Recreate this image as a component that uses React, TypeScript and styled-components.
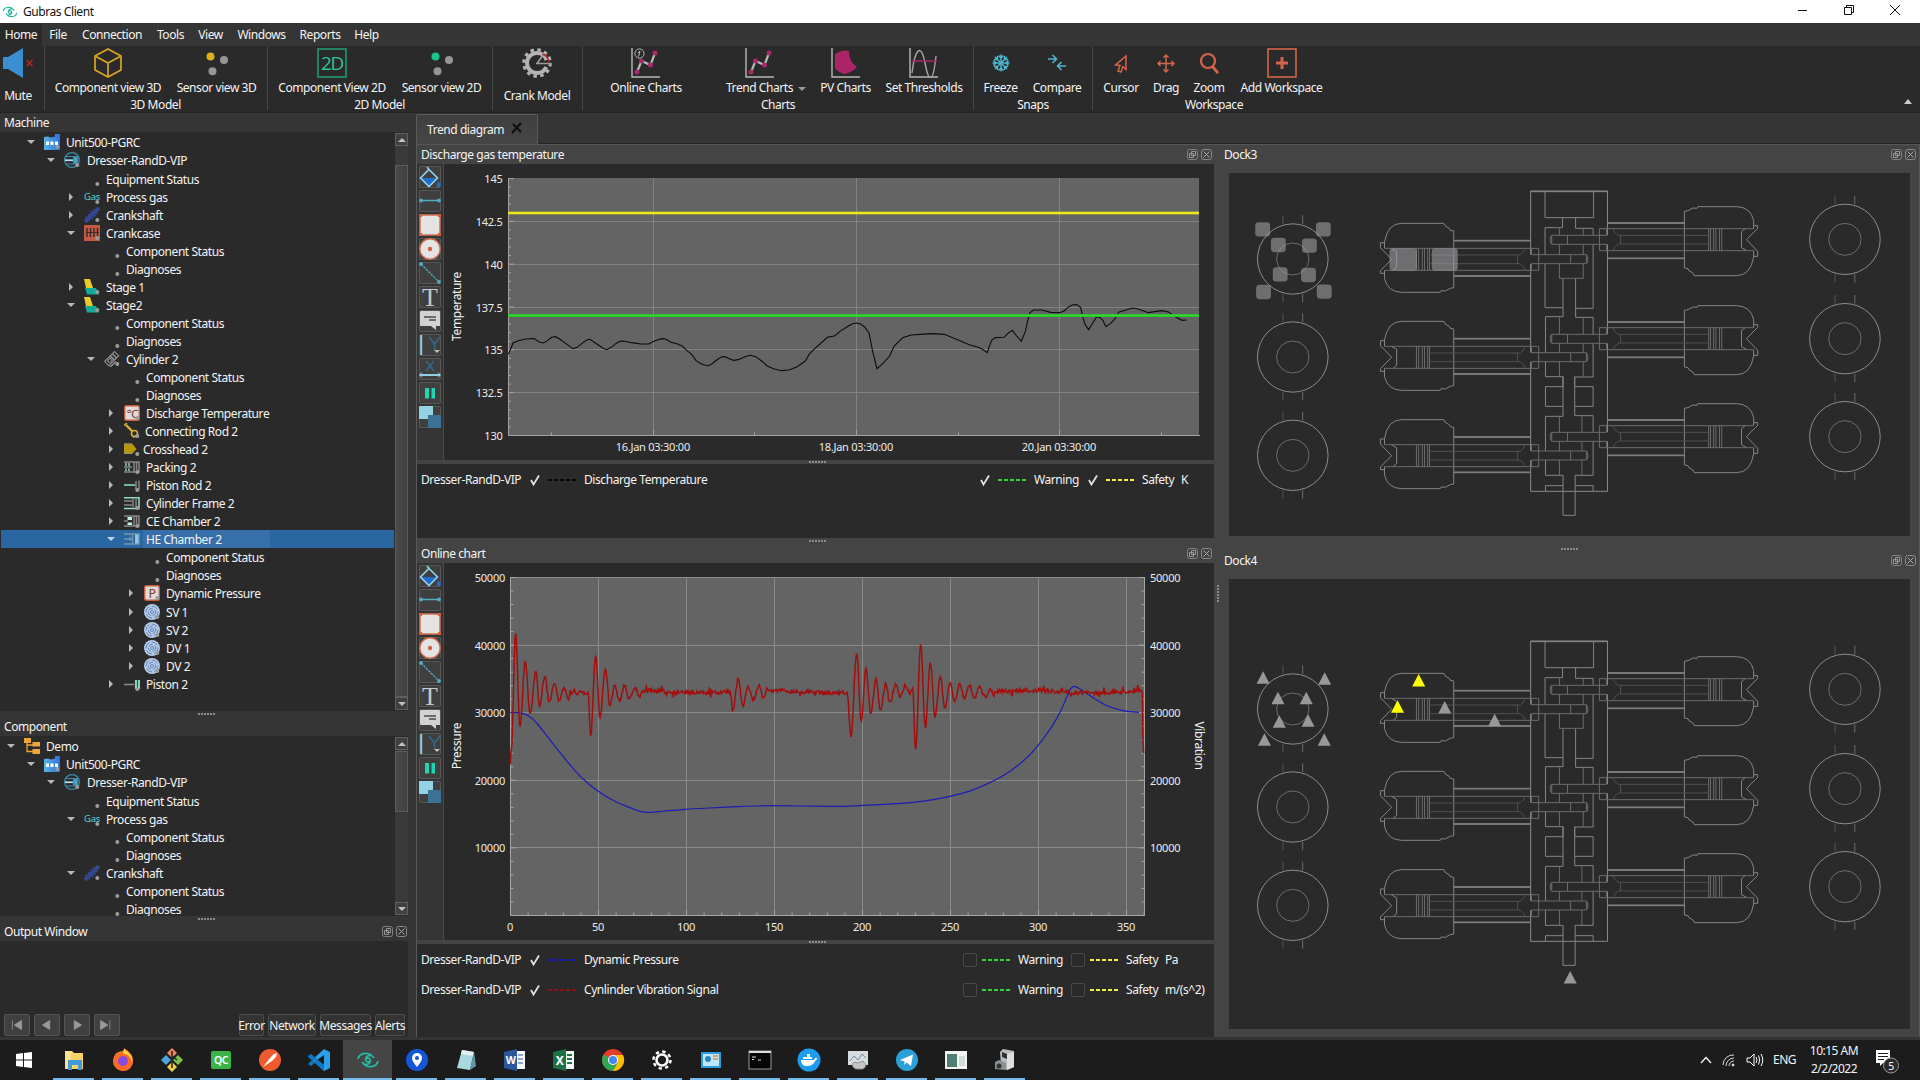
import React from 'react';
import styled, { createGlobalStyle } from 'styled-components';

const Global = createGlobalStyle`
  *, *::before, *::after { box-sizing: border-box; }
  html, body { margin: 0; background: #353535; }
  body { font: 12px/18px "Noto Sans", "Open Sans", sans-serif; letter-spacing: -0.43px; color: #f4f4f4; overflow: hidden; }
  svg { display: block; }
`;

const Window = styled.div`
  width: 1920px; height: 1080px; display: flex; flex-direction: column; background: #353535;
  white-space: nowrap; overflow: hidden;
`;

/* ---------- title + menu ---------- */
const TitleBar = styled.header`
  height: 23px; background: #fff; color: #111; display: flex; align-items: center; padding: 0 19px 0 3px; flex: none;
`;
const TitleText = styled.span`margin-left: 6px; flex: 1;`;
const WinControls = styled.div`display: flex; gap: 34px; align-items: center; padding-bottom: 3px;`;
const MenuBar = styled.nav`height: 23px; display: flex; flex: none; background: #353535;`;
const MenuItem = styled.div<{ $w: number; $active?: boolean }>`
  width: ${p => p.$w}px; text-align: center; line-height: 24px; background: ${p => (p.$active ? '#2a2a2a' : 'transparent')};
`;

/* ---------- ribbon ---------- */
const RibbonBar = styled.div`height: 67px; display: flex; flex: none; background: #2a2a2a; border-bottom: 1px solid #222; position: relative;`;
const Group = styled.div<{ $w: number; $pad: number; $sep?: boolean }>`
  width: ${p => p.$w}px; padding-left: ${p => p.$pad}px; height: 64px; display: flex; flex-direction: column; flex: none;
  border-right: 1px solid ${p => (p.$sep ? '#474747' : 'transparent')};
`;
const GroupRow = styled.div`display: flex;`;
const GroupLabel = styled.div<{ $w: number }>`width: ${p => p.$w}px; text-align: center; line-height: 18px; margin-top: -1px;`;
const Item = styled.div<{ $w: number; $tall?: boolean; $ml?: number }>`
  width: ${p => p.$w}px; margin-left: ${p => p.$ml ?? 0}px; display: flex; flex-direction: column; align-items: center; padding-top: 2px;
  line-height: 18px; height: ${p => (p.$tall ? 59 : 51)}px; justify-content: space-between; flex: none;
`;
const CollapseMark = styled.div`position: absolute; right: 8px; bottom: 8px;`;
const DropMark = styled.span`
  display: inline-block; border: 4px solid transparent; border-top: 4px solid #9a9a9a; border-bottom: 0; margin-left: 5px; vertical-align: 1px;
`;

const Axes = () => <path d="M1 0V29H29" stroke="#b8b8b8" fill="none" strokeWidth="1.4" />;
const Trend = () => (
  <g>
    <path d="M6 24L10.5 13L19.5 17L24 5" stroke="#b8b8b8" strokeWidth="2.2" fill="none" />
    {[[6, 24], [10.5, 13], [19.5, 17], [24, 5]].map(([x, y]) => <circle key={x} cx={x} cy={y} r="2.5" fill="#a92a6a" />)}
  </g>
);
const Ico = ({ w = 30, h = 30, children }: { w?: number; h?: number; children: React.ReactNode }) => (
  <svg width={w} height={h} viewBox={`0 0 ${w} ${h}`}>{children}</svg>
);
const SensorDots = ({ c }: { c: string }) => (
  <Ico w={22}><circle cx="4.500" cy="8.500" r="4" fill={c} /><circle cx="18" cy="12" r="4" fill="#969696" /><circle cx="6.500" cy="23.300" r="4" fill="#969696" /></Ico>
);
const Gear = () => (
  <Ico>
    <circle cx="15" cy="15" r="10" fill="none" stroke="#b4b4b4" strokeWidth="4" strokeDasharray="55.500 7.300" strokeDashoffset="-4" />
    <circle cx="15" cy="15" r="13.300" fill="none" stroke="#b4b4b4" strokeWidth="3" strokeDasharray="3.480 3.480" />
    <path d="M15 15.500L21 7M14 15.500H29" stroke="#9c9c9c" strokeWidth="1.600" />
    <path d="M20.500 6Q26 8 27 14" fill="none" stroke="#b32424" strokeWidth="1.400" />
  </Ico>
);
const Snow = () => (
  <Ico w={18}>
    <g stroke="#4fb6cf" strokeWidth="1.500" fill="none" transform="translate(9 15)">
      {[0, 45, 90, 135, 180, 225, 270, 315].map(a => <path key={a} transform={`rotate(${a})`} d="M0 0V-8.500M-2.500 -7.500L0 -5L2.500 -7.500" />)}
    </g>
  </Ico>
);

const Ribbon = () => (
  <RibbonBar>
    <Group $w={45} $pad={0} $sep>
      <GroupRow>
        <Item $w={36} $tall>
          <Ico w={30}><path d="M0 9H5L20 0V30L5 21H0Z" fill="#3b8fd0" /><path d="M23.500 12L29.500 18M29.500 12L23.500 18" stroke="#b02a2a" strokeWidth="1.500" /></Ico>
          <span>Mute</span>
        </Item>
      </GroupRow>
    </Group>
    <Group $w={223} $pad={2} $sep>
      <GroupRow>
        <Item $w={122}>
          <Ico><g fill="none" stroke="#d8a620" strokeWidth="1.700"><path d="M15 1L28 8V22L15 29L2 22V8Z" /><path d="M2 8L15 15L28 8M15 15V29" /></g></Ico>
          <span>Component view 3D</span>
        </Item>
        <Item $w={95}><SensorDots c="#dfae1c" /><span>Sensor view 3D</span></Item>
      </GroupRow>
      <GroupLabel $w={217}>3D Model</GroupLabel>
    </Group>
    <Group $w={225} $pad={3} $sep>
      <GroupRow>
        <Item $w={122}>
          <Ico><rect x="1" y="1" width="28" height="28" fill="none" stroke="#249a72" strokeWidth="1.600" /><text x="15" y="22" fontSize="19" fontFamily="Open Sans" fontWeight="400" textAnchor="middle" letterSpacing="-1.2" fill="#2fc493">2D</text></Ico>
          <span>Component View 2D</span>
        </Item>
        <Item $w={97}><SensorDots c="#1dc48a" /><span>Sensor view 2D</span></Item>
      </GroupRow>
      <GroupLabel $w={217}>2D Model</GroupLabel>
    </Group>
    <Group $w={90} $pad={0} $sep>
      <GroupRow><Item $w={88} $tall><Gear /><span>Crank Model</span></Item></GroupRow>
    </Group>
    <Group $w={391} $pad={18} $sep>
      <GroupRow>
        <Item $w={90}>
          <Ico><Axes /><Trend /><circle cx="8.500" cy="5.500" r="4.600" fill="none" stroke="#b8b8b8" /><path d="M7.500 8.500L9 3L7 5" stroke="#b8b8b8" fill="none" /></Ico>
          <span>Online Charts</span>
        </Item>
        <Item $w={112} $ml={19}><Ico w={42}><Axes /><Trend /></Ico><span>Trend Charts<DropMark /></span></Item>
        <Item $w={47}><Ico><Axes /><path d="M4 6Q12 1 18 3Q18 14 26 19Q20 25 13 26Q5 23 4 20Z" fill="#ab2468" /></Ico><span>PV Charts</span></Item>
        <Item $w={98} $ml={6}><Ico><Axes /><path d="M3 25C6 1 12 -6 16 15S24 36 27 8" fill="none" stroke="#a4a4a4" strokeWidth="1.400" /><path d="M3 13H28" stroke="#a92a6a" strokeWidth="1.500" /></Ico><span>Set Thresholds</span></Item>
      </GroupRow>
      <GroupLabel $w={354}>Charts</GroupLabel>
    </Group>
    <Group $w={119} $pad={1} $sep>
      <GroupRow>
        <Item $w={51}><Snow /><span>Freeze</span></Item>
        <Item $w={62}><Ico w={18}><g fill="none" stroke="#4fb6cf" strokeWidth="1.600"><path d="M0 11H8M4.500 7L8.500 11L4.500 15M18 18H10M13.500 14L9.500 18L13.500 22" /></g></Ico><span>Compare</span></Item>
      </GroupRow>
      <GroupLabel $w={116}>Snaps</GroupLabel>
    </Group>
    <Group $w={260} $pad={4}>
      <GroupRow>
        <Item $w={48}><Ico w={14}><path d="M12 8L1.500 17L6 17.500L4 23L7 24L9 18.500L12 21.500Z" fill="none" stroke="#d4654a" strokeWidth="1.500" /></Ico><span>Cursor</span></Item>
        <Item $w={42}><Ico w={18}><g fill="none" stroke="#d4654a" strokeWidth="1.500"><path d="M9 7V24M1 15.500H17M6.500 9.500L9 7L11.500 9.500M6.500 21.500L9 24L11.500 21.500M3.500 13L1 15.500L3.500 18M14.500 13L17 15.500L14.500 18" /></g></Ico><span>Drag</span></Item>
        <Item $w={44}><Ico w={20}><circle cx="9" cy="13" r="7" fill="none" stroke="#d4654a" strokeWidth="2.200" /><path d="M13.500 18.500L19 25" stroke="#d4654a" strokeWidth="2.800" /></Ico><span>Zoom</span></Item>
        <Item $w={101}><Ico><rect x="1" y="1" width="28" height="28" fill="none" stroke="#d4654a" strokeWidth="1.600" /><path d="M15 9V21M9 15H21" stroke="#d4654a" strokeWidth="3" /></Ico><span>Add Workspace</span></Item>
      </GroupRow>
      <GroupLabel $w={234}>Workspace</GroupLabel>
    </Group>
    <CollapseMark><svg width="8" height="5"><path d="M0 5L4 0L8 5Z" fill="#ccc" /></svg></CollapseMark>
  </RibbonBar>
);

/* ---------- tree ---------- */
const Dot = () => <circle cx="13.300" cy="13" r="2" fill="#9d9d9d" />;
const icons: Record<string, React.ReactNode> = {
  none: null,
  demo: <g fill="#f0a636"><rect width="7" height="5" /><rect x="8.500" y="4" width="7.500" height="4.500" /><rect x="8.500" y="11" width="7.500" height="5" /><path d="M3 5V13.500H9M3 7H9" stroke="#f0a636" strokeWidth="1.300" fill="none" /></g>,
  unit: <g><path d="M0 3L4 2.500L7 3.500L11 2.500V0H16V16H0Z" fill="url(#unitBlue)" /><path d="M2 7.500H5V11H2ZM6.500 7.500H9.500V11H6.500ZM11 7.500H14V11H11Z" fill="#fff" /></g>,
  vip: <g fill="none" stroke="#3b8ea8" strokeWidth="1.200"><circle cx="8" cy="8" r="7.400" /><path d="M2 4.500H14M2 12H14M1 8H10" /><path d="M1 8.300H9" stroke="#b8e2ee" strokeWidth="1.600" /><rect x="9.500" y="5" width="4" height="6" fill="#4ca6c4" /></g>,
  gas: <text x="0" y="10.500" fontSize="9.500" letterSpacing="-.2" fill="#52d6dc">Gas</text>,
  shaft: <g stroke="#34478e"><path d="M1 15L15 1" strokeWidth="4" /><path d="M1.500 9.500L6 14M4 7L9 12M6.500 4.500L11.500 9.500M9 2.500L13.500 7" strokeWidth="1.800" /></g>,
  crankcase: <g><rect width="16" height="16" fill="#c35a45" /><path d="M3 3V12M6.500 3V12M10 3V12M13.500 3V12" stroke="#3a2a27" strokeWidth="1.400" /><path d="M2 7.500H15" stroke="#3a2a27" /></g>,
  stage: <g><path d="M0 0H6L9 9H2Z" fill="#e8cc2a" /><path d="M1 9H12L15 15.500H3Z" fill="#16ab99" /></g>,
  cyl: <g transform="rotate(-45 8 8)" fill="none" stroke="#999"><rect x="1" y="4.500" width="14" height="6" /><rect x="3.500" y="6" width="4" height="3" /><path d="M9 4.500V10.500M12 4.500V10.500M0 12.500H9" strokeWidth="1.300" /></g>,
  temp: <g><rect x=".7" y=".7" width="14.600" height="14.600" rx="1.500" fill="#dcdcdc" stroke="#c85b3a" strokeWidth="1.400" /><text x="8" y="12.500" fontSize="11.500" textAnchor="middle" fill="#7d3a26">℃</text></g>,
  press: <g><rect x=".7" y=".7" width="14.600" height="14.600" rx="1.500" fill="#dcdcdc" stroke="#c85b3a" strokeWidth="1.400" /><text x="8" y="12.500" fontSize="12.500" textAnchor="middle" fill="#7d3a26">P</text></g>,
  conrod: <g fill="none" stroke="#d2b141"><circle cx="10.500" cy="10.500" r="3" strokeWidth="1.600" /><path d="M2 2L8.500 8.500" strokeWidth="2.400" /><path d="M0 2.500L3 0M9 14L13 13" strokeWidth="1.600" /></g>,
  crosshead: <g><path d="M0 2.500H8L12.500 8L8 13H0Z" fill="#b6980d" /><path d="M0 3H8M0 12.500H8" stroke="#8d8d8d" /></g>,
  packing: <g fill="none" stroke="#868686" strokeWidth="1.500"><path d="M0 3H15V13H0M0 8H8M10 3V13M12.500 3V11" /><path d="M2 4V7M5 4V7M2 9.500V12M5 9.500V12" stroke="#8fcfc0" /></g>,
  pistonrod: <g fill="none"><path d="M0 8H11" stroke="#86d6c3" strokeWidth="1.600" /><path d="M12 4V12M15 3.500V13" stroke="#868686" strokeWidth="1.500" /></g>,
  frame: <g fill="none" strokeWidth="1.500"><path d="M0 2.800H15V13.500H0" stroke="#8fdcca" /><path d="M0 6H8M0 10H8M9 4V12M12 4V12" stroke="#868686" /></g>,
  ce: <g fill="none" stroke="#868686" strokeWidth="1.500"><path d="M0 3H15V13H0M0 8H4M10 3V13M12.500 3V11" /><path d="M3.500 4H8V7H3.500ZM3.500 9.500H8V12H3.500Z" fill="#bff0e4" stroke="none" /></g>,
  he: <g fill="none" stroke="#7697ad" strokeWidth="1.300"><path d="M0 3H15V13H0M0 8H8M8.500 3V13M6 6V10" /><rect x="11" y="3.500" width="3.500" height="9" fill="#8fc8e6" stroke="none" /></g>,
  valve: <g fill="none"><circle cx="8" cy="8" r="8" fill="#b7cbe6" /><g stroke="#5f87bf"><circle cx="8" cy="8" r="6" strokeDasharray="7 2" /><circle cx="8" cy="8" r="3.700" strokeDasharray="5 1.500" /><circle cx="8" cy="8" r="1.500" /></g></g>,
  piston: <g fill="none"><path d="M0 8.500H10" stroke="#8d8d8d" strokeWidth="1.500" /><path d="M12 4V13M15 4V13" stroke="#86d6c3" strokeWidth="2.200" /></g>,
};

type Node = { d: number; t: string; i?: string; a?: 'open' | 'shut'; sel?: boolean; h?: number; dx?: number };
const Row = styled.div<{ $d: number; $h: number; $sel?: boolean }>`
  display: flex; height: ${p => p.$h}px; padding-left: ${p => 24 + p.$d * 20}px; background: ${p => (p.$sel ? '#2a66a2' : 'transparent')};
  margin-left: 1px; margin-right: 1px; line-height: 20px; flex: none;
`;
const ArrowBox = styled.div`width: 11px; height: 18px; display: flex; align-items: center; justify-content: center;`;
const IconBox = styled.div`width: 16px; margin: 1px 3px 0 8px; height: 16px;`;
const RowText = styled.span<{ $sel?: boolean; $dx: number }>`
  padding: 0 ${p => (p.$sel ? 48 : 2)}px 0 ${p => 3 + p.$dx}px; background: ${p => (p.$sel ? '#376fab' : 'transparent')}; height: 18px;
`;
const TreeRow = ({ n }: { n: Node }) => (
  <Row $d={n.d} $h={n.h ?? 18} $sel={n.sel}>
    <ArrowBox>
      {n.a === 'open' && <svg width="8" height="4"><path d="M0 0H8L4 4Z" fill={n.sel ? '#bcd6f0' : '#b8b8b8'} /></svg>}
      {n.a === 'shut' && <svg width="4" height="8"><path d="M0 0V8L4 4Z" fill="#b8b8b8" /></svg>}
    </ArrowBox>
    <IconBox><svg width="16" height="16" viewBox="0 0 16 16">{icons[n.i ?? 'none']}{n.i !== 'demo' && !n.sel && <Dot />}</svg></IconBox>
    <RowText $sel={n.sel} $dx={n.dx ?? 0}>{n.t}</RowText>
  </Row>
);
const status = (d: number): Node[] => [{ d, t: 'Component Status' }, { d, t: 'Diagnoses' }];
const machine: Node[] = [
  { d: 0, t: 'Unit500-PGRC', i: 'unit', a: 'open' },
  { d: 1, t: 'Dresser-RandD-VIP', i: 'vip', a: 'open', h: 19, dx: 1 },
  { d: 2, t: 'Equipment Status' },
  { d: 2, t: 'Process gas', i: 'gas', a: 'shut' },
  { d: 2, t: 'Crankshaft', i: 'shaft', a: 'shut' },
  { d: 2, t: 'Crankcase', i: 'crankcase', a: 'open' },
  ...status(3),
  { d: 2, t: 'Stage 1', i: 'stage', a: 'shut' },
  { d: 2, t: 'Stage2', i: 'stage', a: 'open' },
  ...status(3),
  { d: 3, t: 'Cylinder 2', i: 'cyl', a: 'open' },
  ...status(4),
  { d: 4, t: 'Discharge Temperature', i: 'temp', a: 'shut' },
  { d: 4, t: 'Connecting Rod 2', i: 'conrod', a: 'shut', dx: -1 },
  { d: 4, t: 'Crosshead 2', i: 'crosshead', a: 'shut', dx: -3 },
  { d: 4, t: 'Packing 2', i: 'packing', a: 'shut' },
  { d: 4, t: 'Piston Rod 2', i: 'pistonrod', a: 'shut' },
  { d: 4, t: 'Cylinder Frame 2', i: 'frame', a: 'shut' },
  { d: 4, t: 'CE Chamber 2', i: 'ce', a: 'shut' },
  { d: 4, t: 'HE Chamber 2', i: 'he', a: 'open', sel: true },
  ...status(5),
  { d: 5, t: 'Dynamic Pressure', i: 'press', a: 'shut', h: 19 },
  { d: 5, t: 'SV 1', i: 'valve', a: 'shut' },
  { d: 5, t: 'SV 2', i: 'valve', a: 'shut' },
  { d: 5, t: 'DV 1', i: 'valve', a: 'shut' },
  { d: 5, t: 'DV 2', i: 'valve', a: 'shut' },
  { d: 4, t: 'Piston 2', i: 'piston', a: 'shut' },
];
const component: Node[] = [
  { d: -1, t: 'Demo', i: 'demo', a: 'open' },
  { d: 0, t: 'Unit500-PGRC', i: 'unit', a: 'open' },
  { d: 1, t: 'Dresser-RandD-VIP', i: 'vip', a: 'open', h: 19, dx: 1 },
  { d: 2, t: 'Equipment Status' },
  { d: 2, t: 'Process gas', i: 'gas', a: 'open' },
  ...status(3),
  { d: 2, t: 'Crankshaft', i: 'shaft', a: 'open' },
  ...status(3),
];

const Work = styled.main`display: flex; height: 927px; flex: none; padding-bottom: 3px;`;
const Side = styled.aside`width: 408px; display: flex; flex-direction: column; margin-right: 8px; flex: none;`;
const PanelHead = styled.div<{ $h: number; $pr?: number }>`
  height: ${p => p.$h}px; padding: 0 ${p => p.$pr ?? 1}px 0 4px; display: flex; justify-content: space-between; flex: none; line-height: 20px;
`;
const TreeBox = styled.div<{ $h: number }>`height: ${p => p.$h}px; background: #2a2a2a; display: flex; flex: none; overflow: hidden;`;
const Rows = styled.div`flex: 1; padding-top: 1px; display: flex; flex-direction: column; overflow: hidden;`;
const Scroll = styled.div`width: 13px; background: #3a3a3a; display: flex; flex-direction: column; margin: 1px 0;`;
const ScrollBtn = styled.div`
  height: 13px; border: 1px solid #606060; background: #404040; display: flex; align-items: center; justify-content: center; flex: none;
`;
const Track = styled.div<{ $top: number }>`flex: 1; padding-top: ${p => p.$top}px;`;
const Thumb = styled.div<{ $h: number }>`height: ${p => p.$h}px; background: linear-gradient(90deg, #4a4a4a, #404040); border: 1px solid #5c5c5c;`;
const Grip = styled.div<{ $v?: boolean }>`
  flex: none; display: flex; gap: 1px; flex-direction: ${p => (p.$v ? 'column' : 'row')};
  & > i { width: 2px; height: 2px; background: #8c8c8c; }
`;
const Dots = ({ v }: { v?: boolean }) => <Grip $v={v}>{[0, 1, 2, 3, 4, 5].map(i => <i key={i} />)}</Grip>;
const SplitH = styled.div<{ $h: number; $pt?: number }>`
  height: ${p => p.$h}px; padding: ${p => p.$pt ?? 0}px 0 0 4px; display: flex; justify-content: center; align-items: center; flex: none;
`;

const ScrollBar = ({ top, h }: { top: number; h: number }) => (
  <Scroll>
    <ScrollBtn><svg width="8" height="4"><path d="M0 4L4 0L8 4Z" fill="#c0c0c0" /></svg></ScrollBtn>
    <Track $top={top}><Thumb $h={h} /></Track>
    <ScrollBtn><svg width="8" height="4"><path d="M0 0H8L4 4Z" fill="#c0c0c0" /></svg></ScrollBtn>
  </Scroll>
);
const HeadBtns = styled.div<{ $mt?: number }>`display: flex; gap: 3px; margin-top: ${p => p.$mt ?? 4}px;`;
const DockButtons = ({ mt }: { mt?: number }) => (
  <HeadBtns $mt={mt}>
    <svg width="11" height="11" fill="none" stroke="#a0a0a0" strokeWidth=".9"><rect x=".5" y=".5" width="10" height="10" rx="2" stroke="#888" /><path d="M4.500 2.500H8.500V6.500H4.500ZM2.500 4.500H6.500V8.500H2.500Z" /></svg>
    <svg width="11" height="11" fill="none" stroke="#a8a8a8" strokeWidth="1"><rect x=".5" y=".5" width="10" height="10" rx="2" stroke="#888" /><path d="M2.500 2.500L8.500 8.500M8.500 2.500L2.500 8.500" /></svg>
  </HeadBtns>
);
const Output = styled.div`flex: 1; background: #2a2a2a; display: flex; align-items: flex-end; padding: 0 3px 1px 4px; gap: 4px;`;
const NavBtn = styled.button`
  width: 26px; height: 22px; padding: 0; border: 1px solid #555; border-radius: 2px; background: #404040; display: flex; align-items: center; justify-content: center;
`;
const TextBtn = styled.button<{ $w: number }>`
  width: ${p => p.$w}px; height: 22px; padding: 2px 0 0; border: 1px solid #4c4c4c; border-radius: 2px; background: #333; color: #f4f4f4; font: inherit;
  letter-spacing: -0.4px; display: flex; justify-content: center; align-items: center;
`;
const Push = styled.div`flex: 1;`;

const SidePanel = () => (
  <Side>
    <PanelHead $h={19}>Machine</PanelHead>
    <TreeBox $h={579}><Rows>{machine.map((n, i) => <TreeRow key={i} n={n} />)}</Rows><ScrollBar top={19} h={532} /></TreeBox>
    <SplitH $h={6}><Dots /></SplitH>
    <PanelHead $h={19}>Component</PanelHead>
    <TreeBox $h={180}><Rows>{component.map((n, i) => <TreeRow key={i} n={n} />)}</Rows><ScrollBar top={1} h={61} /></TreeBox>
    <SplitH $h={6}><Dots /></SplitH>
    <PanelHead $h={19}>Output Window<DockButtons /></PanelHead>
    <Output>
      {['M9 1V11M19 1L11 6L19 11Z', 'M17 1L9 6L17 11Z', 'M11 1L19 6L11 11Z', 'M17 1V11M7 1L15 6L7 11Z'].map(d => (
        <NavBtn key={d}><svg width="26" height="12" viewBox="1 0 26 12"><path d={d} fill="#9a9a9a" stroke="#9a9a9a" strokeWidth=".8" /></svg></NavBtn>
      ))}
      <Push />
      <TextBtn $w={25}>Error</TextBtn><TextBtn $w={48}>Network</TextBtn><TextBtn $w={51}>Messages</TextBtn><TextBtn $w={30}>Alerts</TextBtn>
    </Output>
  </Side>
);

/* ---------- chart tools ---------- */
const ToolCol = styled.div`width: 27px; background: #353535; border-right: 1px solid #4a4a4a; padding: 2px 0 0 2px; display: flex; flex-direction: column; gap: 2px; flex: none;`;
const ToolBtn = styled.div`
  width: 22px; height: 22px; border-radius: 2px; background: #3f3f3f; box-shadow: inset 0 0 0 1px #565656;
  & > svg { overflow: visible; }
`;
const tools: Record<string, React.ReactNode> = {
  fill: <g><path d="M2.500 12H17.500L10 19.500Z" fill="#1f6fd0" /><path d="M8 1L10.500 4M10 3.500L18.500 12L10 20.500L1.500 12Z" fill="none" stroke="#8fd0e6" strokeWidth="1.700" /><path d="M19.500 15Q22 18 21.500 20Q19.500 22.500 17.800 20Q17.500 18 19.500 15Z" fill="#1f6fd0" /></g>,
  line: <g><path d="M2 10.500H20" stroke="#53aec4" strokeWidth="1.500" /><circle cx="2" cy="10.500" r="1.900" fill="#53aec4" /><circle cx="20" cy="10.500" r="1.900" fill="#53aec4" /></g>,
  rect: <g><rect x="1" y="1" width="20" height="20" fill="#e4e4e4" stroke="#d06a4c" strokeWidth="1.400" />{[[0, 0], [19, 0], [0, 19], [19, 19]].map(([x, y]) => <rect key={`${x}${y}`} x={x} y={y} width="3" height="3" fill="#d0603f" />)}</g>,
  circle: <g><circle cx="11" cy="11" r="10.200" fill="#e4e4e4" stroke="#d06a4c" strokeWidth="1.400" /><circle cx="11" cy="11" r="2.200" fill="#d0603f" /></g>,
  diag: <g><path d="M2 2L20 20" stroke="#53aec4" strokeWidth="1.300" strokeDasharray="2.500 1" /><circle cx="2" cy="2" r="1.900" fill="#53aec4" /><circle cx="20" cy="20" r="1.900" fill="#53aec4" /></g>,
  text: <text x="11" y="19.500" textAnchor="middle" fontSize="26" letterSpacing="0" fontFamily="Liberation Serif" fill="#c8c8c8">T</text>,
  note: <g><path d="M1 2Q1 1 2 1H20Q21 1 21 2V16H17V20L12 16H2Q1 16 1 15Z" fill="#d2d2d2" /><path d="M5 7H17M10 10H17" stroke="#4a4a4a" strokeWidth="1.300" /></g>,
  y: <g><path d="M2.200 1V21" stroke="#8fd0e6" strokeWidth="2" /><path d="M10 3L15.500 10V16M21 3L15.500 10" stroke="#33698c" strokeWidth="1.600" fill="none" /><path d="M15 16H21L18 19Z" fill="#c0c0c0" /></g>,
  x: <g><path d="M7 3L15 13M15 3L7 13" stroke="#33698c" strokeWidth="1.400" /><path d="M1 17H21" stroke="#8fd0e6" strokeWidth="2" /><path d="M3 14.500L0.500 17L3 19.500M19 14.500L21.500 17L19 19.500" stroke="#8fd0e6" fill="none" /></g>,
  pause: <g fill="#1fd6b2"><rect x="6" y="6" width="4" height="10.500" /><rect x="12.500" y="6" width="3.500" height="10.500" /></g>,
  squares: <g><rect width="14" height="13" fill="#93d2e4" /><rect x="9" y="9" width="13" height="13" fill="#3b7193" /></g>,
};
const Tools = ({ list }: { list: string[] }) => (
  <ToolCol>{list.map(t => <ToolBtn key={t}><svg width="22" height="22">{tools[t]}</svg></ToolBtn>)}</ToolCol>
);

/* ---------- charts ---------- */
type P = [number, number];
const pts = (s: string): P[] => s.trim().split(/\s+/).map(p => p.split(',').map(Number) as P);
const shift = (a: P[]): P[] => a.map(([x, y]) => [x + 1170, y]);
const poly = (a: P[]) => 'M' + a.map(p => p.map(v => v.toFixed(1)).join(' ')).join('L');
const smooth = (a: P[]) => {
  let d = `M${a[0]}`;
  for (let i = 0; i < a.length - 1; i++) {
    const p0 = a[Math.max(0, i - 1)], p1 = a[i], p2 = a[i + 1], p3 = a[Math.min(a.length - 1, i + 2)];
    d += `C${p1[0] + (p2[0] - p0[0]) / 6},${p1[1] + (p2[1] - p0[1]) / 6} ${p2[0] - (p3[0] - p1[0]) / 6},${p2[1] - (p3[1] - p1[1]) / 6} ${p2}`;
  }
  return d;
};

const tempLine = [
  ...pts('295,718 303,700 309,684 325,677 347,672 373,671 386,680 400,684 412,677 425,667 437,665 449,672 475,691 489,701 501,697 515,686 530,675 540,673 552,681 578,699 590,704 604,697 617,686 629,679 641,678 665,683 692,687 716,687 735,677 755,671 767,672 781,681 805,688 818,694 830,706 845,718 858,737 875,747 893,753 905,747 920,735 934,726 945,725 958,731 971,736 985,734 1005,725 1021,721 1037,725 1055,738 1072,753 1090,761 1115,767 1137,765 1160,756'),
  ...shift(pts('16,738 28,717 45,700 70,678 82,667 93,665 105,662 120,649 145,633 158,626 170,624 182,627 195,637 207,654 218,710 231,761 249,745 269,723 282,694 308,668 333,660 360,658 400,656 433,658 460,669 510,690 530,695 546,702 562,713 568,694 575,676 586,668 612,667 623,656 637,646 650,663 664,679 676,650 682,622 689,594 700,585 725,585 752,592 778,593 792,588 804,577 817,570 830,569 842,577 848,605 855,628 866,644 878,625 890,605 901,608 909,617 918,635 932,625 945,611 956,592 975,586 997,579 1012,581 1045,593 1085,587 1106,591 1122,603 1146,616 1160,615')),
];
const pressureLine = [
  ...pts('301,533 322,533 340,536 352,541 370,554 385,570 408,599 435,634 460,665 485,695 511,724 540,750 565,769 590,785 620,801 645,812 670,822 690,829 712,832 735,831 765,828 828,823 900,819 980,815 1040,813 1095,812'),
  ...shift(pts('0,813 90,814 135,814 190,811 290,806 340,802 400,794 450,784 507,769 550,752 590,733 630,709 665,682 690,659 716,629 740,597 765,559 785,522 800,487 810,465 817,456 824,454 835,459 858,474 885,492 915,509 940,519 965,526 990,530 1017,532')),
];

let seed = 7;
const rnd = () => ((seed = (seed * 16807) % 2147483647) / 2147483647);
const quiet = (from: number, to: number): P[] => {
  const out: P[] = [];
  for (let x = from; x < to; x += 2.2) {
    const base = 470 + 3.5 * Math.sin(x / 62);
    const spike = rnd() > 0.92 ? 14 : 0;
    out.push([x, base + (rnd() - 0.5) * (12 + spike * 1.8)]);
  }
  return out;
};
const burst = (a: P[]): P[] => {
  const out: P[] = [a[0]];
  for (let i = 1; i < a.length; i++) {
    const [x0, y0] = a[i - 1], [x1, y1] = a[i];
    const n = Math.max(2, Math.round((x1 - x0) / 2));
    for (let k = 1; k <= n; k++) {
      const t = k / n, s = (1 - Math.cos(Math.PI * t)) / 2;
      out.push([x0 + (x1 - x0) * t, y0 + (y1 - y0) * s + (k < n ? (rnd() - 0.5) * 12 : 0)]);
    }
  }
  return out;
};
const vibration: P[] = [
  ...burst(pts('301,688 304,640 317,295 330,575 346,378 360,534 378,410 388,512 405,425 417,500 434,447 447,495 462,458 476,494 482,465')),
  ...quiet(484, 532),
  ...burst(pts('534,472 542,602 557,362 570,548 586,400 600,512 614,450 628,497 643,452 658,491 675,458 688,486 700,466')),
  ...quiet(702, 960),
  ...burst(pts('961,472 968,528 985,430 998,512 1014,453 1030,494 1046,453 1060,487 1072,460')),
  ...quiet(1074, 1310),
  ...shift(burst(pts('141,470 153,606 170,356 184,558 198,400 212,534 228,430 241,524 258,447 269,500 288,450 300,487 316,453 330,478 338,460 347,643 362,330 376,577 391,382 405,548 421,425 435,518 451,443 464,500 479,445 493,492 508,453 524,487 537,458 556,487 570,460 582,484'))),
  ...quiet(1754, 2196),
  ...shift(pts('1027,475 1028,590 1031,655')),
];

const AxisText = styled.text`font: 11px "Noto Sans", sans-serif; letter-spacing: -0.25px; fill: #ececec;`;
const AxisName = styled.text`font: 12px "Noto Sans", sans-serif; letter-spacing: -0.35px; fill: #f2f2f2;`;
const range = (n: number) => Array.from({ length: n }, (_, i) => i);
const traceAt = (oy: number) => `translate(410 ${oy}) scale(.33333)`;

const TrendChart = () => {
  const ys = [178.5, 221.500, 264.500, 307.500, 349.500, 392.500, 435.500];
  const xs = [653.5, 856.5, 1059.5];
  return (
    <svg width="770" height="296" viewBox="444 164 770 296">
      <rect x="508" y="178" width="691" height="258" fill="#646464" />
      {ys.slice(1, 6).map(y => <path key={y} d={`M508 ${y}H1199`} stroke="#828282" />)}
      {xs.map(x => <path key={x} d={`M${x} 178V436`} stroke="#828282" />)}
      <path d="M508.500 178V435.500H1200" fill="none" stroke="#a2a2a2" />
      {range(31).map(i => { const y = 178.5 + i * 8.567; return <path key={i} d={`M509 ${y}h${i % 5 ? 2 : 5}`} stroke="#a2a2a2" />; })}
      {[551.5, 754.5, 958.5, 1161.5].map(x => <path key={x} d={`M${x} 435v-2.500`} stroke="#a2a2a2" />)}
      {xs.map(x => <path key={x} d={`M${x} 435v-5`} stroke="#a2a2a2" />)}
      <path d={poly(tempLine)} transform={traceAt(115)} fill="none" stroke="#0c0c0c" strokeWidth="3.300" />
      <path d="M508 213H1199" stroke="#b9b51e" strokeWidth="3" /><path d="M508 213H1199" stroke="#fbf829" strokeWidth="1.600" />
      <path d="M508 315.500H1199" stroke="#2bbd2f" strokeWidth="3" /><path d="M508 315.500H1199" stroke="#2fdc34" strokeWidth="1.400" />
      {['145', '142.5', '140', '137.5', '135', '132.5', '130'].map((t, i) => <AxisText key={t} x="502.500" y={ys[i] + 4} textAnchor="end">{t}</AxisText>)}
      {['16.Jan 03:30:00', '18.Jan 03:30:00', '20.Jan 03:30:00'].map((t, i) => <AxisText key={t} x={xs[i] - 0.7} y="451" textAnchor="middle">{t}</AxisText>)}
      <AxisName transform="translate(461 306.500) rotate(-90)" textAnchor="middle">Temperature</AxisName>
    </svg>
  );
};
const OnlineChart = () => {
  const ys = [577.5, 645.5, 712.5, 780.5, 847.5];
  const xs = range(8).map(i => 510.5 + i * 88);
  return (
    <svg width="770" height="377" viewBox="444 563 770 377">
      <rect x="510" y="577" width="635" height="339" fill="#646464" />
      {ys.map(y => <path key={y} d={`M510 ${y}H1145`} stroke="#8a8a8a" />)}
      {xs.slice(1).map(x => <path key={x} d={`M${x} 577V915`} stroke="#8a8a8a" />)}
      <path d="M510.500 577V915.500H1144.500V577" fill="none" stroke="#a6a6a6" />
      {range(26).map(i => { const y = 577.5 + i * 13.52, l = i % 5 ? 2.5 : 5; return <path key={i} d={`M511 ${y}h${l}M1144 ${y}h${-l}`} stroke="#a6a6a6" />; })}
      {range(37).map(i => <path key={i} d={`M${510.5 + i * 17.6} 915v${i % 5 ? -2.5 : -5}`} stroke="#a6a6a6" />)}
      <path d={smooth(pressureLine)} transform={traceAt(535)} fill="none" stroke="#1c1cb4" strokeWidth="3.600" />
      <path d={poly(vibration)} transform={traceAt(535)} fill="none" stroke="#a30d0d" strokeWidth="4.400" />
      {['50000', '40000', '30000', '20000', '10000'].map((t, i) => (
        <g key={t}><AxisText x="505" y={ys[i] + 4} textAnchor="end">{t}</AxisText><AxisText x="1150" y={ys[i] + 4}>{t}</AxisText></g>
      ))}
      {xs.map((x, i) => <AxisText key={x} x={x - 0.5} y="931" textAnchor="middle">{i * 50}</AxisText>)}
      <AxisName transform="translate(461 746) rotate(-90)" textAnchor="middle">Pressure</AxisName>
      <AxisName transform="translate(1194.500 745.500) rotate(90)" textAnchor="middle">Vibration</AxisName>
    </svg>
  );
};

const MainPane = styled.div`flex: 1; display: flex; flex-direction: column;`;
const TabStrip = styled.div`height: 31px; flex: none; padding-top: 1px; display: flex; border-bottom: 1px solid #242424; `;
const Tab = styled.div`
  width: 122px; height: 30px; background: linear-gradient(#3f3f3f, #464646); border: 1px solid #5a5a5a; border-bottom: 0; border-radius: 2px 2px 0 0;
  display: flex; padding: 6px 0 0 10px; gap: 7px; & > svg { margin-top: 1px; }
`;
const Board = styled.div`flex: 1; display: flex; background: #444; border-left: 1px solid #5a5a5a; border-top: 1px solid #555; border-right: 1px solid #5a5a5a; min-height: 0;`;
const ChartsCol = styled.div`width: 797px; display: flex; flex-direction: column; flex: none;`;
const ChartRow = styled.div`display: flex; background: #2a2a2a; flex: none;`;
const Legend = styled.div<{ $h?: number; $pt: number }>`
  ${p => (p.$h ? `height: ${p.$h}px; flex: none;` : 'flex: 1;')} background: #2a2a2a; padding-top: ${p => p.$pt}px;
`;
const LegendRow = styled.div<{ $dx: number }>`
  display: grid; height: 30px; align-items: center; padding-left: 4px;
  grid-template-columns: 108px 19px 36px ${p => 395 - p.$dx}px 19px 36px 53px 19px 36px 39px auto;
`;
const Swatch = styled.span<{ $c: string }>`
  width: 28px; height: 2px; background: repeating-linear-gradient(90deg, ${p => p.$c} 0 4px, transparent 4px 6px);
`;
const Box = styled.span`width: 14px; height: 14px; border: 1px solid #484848; border-radius: 2px;`;
const Check = () => <svg width="14" height="12"><path d="M2 6L4.500 10.500L10 1.500" fill="none" stroke="#e2e2e2" strokeWidth="1.800" /></svg>;
const LegendLine = ({ c, name, unit, on, dx }: { c: string; name: string; unit: string; on?: boolean; dx: number }) => (
  <LegendRow $dx={dx}>
    <span>Dresser-RandD-VIP</span><Check /><Swatch $c={c} /><span>{name}</span>
    {on ? <Check /> : <Box />}<Swatch $c="#35d23c" /><span>Warning</span>
    {on ? <Check /> : <Box />}<Swatch $c="#f3ee45" /><span>Safety</span><span>{unit}</span>
  </LegendRow>
);

/* ---------- compressor drawing ---------- */
const Ln = styled.g<{ $c?: string }>`
  fill: none; stroke: ${p => p.$c ?? '#858585'};
  & * { vector-effect: non-scaling-stroke; stroke-width: 1px; }
`;
const CylinderUnit = () => (
  <g>
    <Ln>
      <path d="M377 -33V-52Q384 -108 415 -108H509L512 -100L521 -93L523 -87L531 -85V85L523 87L512 95L503 94L501 99H415Q384 98 377 58V33" />
      <path d="M377 -50H368V-35L393 0L368 34V42H377M392 -33L404 -24V24L396 33" />
      <path d="M531 -57H702M531 -55H702M531 49H702M531 51H702" />
    </Ln>
    <path d="M700 -14H826V13H700Z" fill="#2a2a2a" />
    <Ln $c="#6c6c6c">
      <path d="M377 -33H720V33H377" />
      <path d="M448 -33V33M453 -33V33M461 -33V33M466 -33V33M473 -33V33M477 -33V33" />
      <path d="M704 -33V-14H791M704 33V13H791M791 -14H826L829 -8V8L826 13H791ZM826 -14V13" />
    </Ln>
    <Ln $c="#505050"><path d="M477 -13H673M477 13H673M673 -14V14M690 -33L686 -22L679 -14L673 -12M690 33L686 22L679 14L673 12" /></Ln>
  </g>
);
const EndView = ({ x, y }: { x: number; y: number }) => (
  <g transform={`translate(${x} ${y})`}>
    <Ln $c="#8c8c8c"><ellipse rx="78.500" ry="105.500" /></Ln>
    <Ln $c="#6c6c6c"><ellipse rx="36" ry="48" /><path d="M22 -131V-105M22 105V130" /></Ln>
    <Ln $c="#555"><path d="M-22 -131V-105M-22 105V130" /></Ln>
  </g>
);
const Compressor = ({ ty, children }: { ty: number; children: React.ReactNode }) => (
  <g transform={`translate(-14 ${ty}) scale(.44962 .33333)`}>
    {[432, 726, 1021].map(y => <EndView key={y} x={173} y={y} />)}
    {[373, 671, 965].map(y => <EndView key={y} x={1401} y={y} />)}
    <Ln $c="#8a8a8a"><path d="M702 228H873V1129H702Z" /><path d="M702 230H873" /></Ln>
    <Ln>
      <path d="M734 228V308H842V228M773 308V338H734V578H774V605H735V785H774V815H735V874H774V904H735V1081H774V1201H801V1081H841V902H800V874H841V815H800V786H841V607H802V580H841V340H802V308M735 1129V1112H774M801 1112H841V1129" />
      <path d="M774 490V578M802 490V580M774 785V815M800 785V815M774 815V874M800 815V874" />
    </Ln>
    <Ln $c="#6c6c6c"><path d="M766 340V490H819V340M766 607V785M819 607V785M766 904V1081M816 904V1081" /></Ln>
    {[433, 727, 1022].map(y => <g key={y} transform={`translate(0 ${y})`}><CylinderUnit /></g>)}
    {[374, 671, 965].map(y => <g key={y} transform={`translate(1575 ${y}) scale(-1 -1)`}><CylinderUnit /></g>)}
    {children}
  </g>
);
const DockCol = styled.div`flex: 1; display: flex; flex-direction: column; padding: 0 9px 0 0;`;
const DockBody = styled.div<{ $h: number }>`height: ${p => p.$h}px; background: #2a2a2a; flex: none; margin-left: 4px;`;
const Gutter = styled.div`width: 11px; flex: none; padding: 440px 0 0 3px;`;
const DockHead = styled.div<{ $h: number; $lh: number }>`
  height: ${p => p.$h}px; display: flex; justify-content: space-between; margin: 0 -6px 0 -1px; flex: none; line-height: ${p => p.$lh}px;
`;

const chips: P[] = [[106, 343], [241, 343], [141, 390], [210, 392], [145, 478], [208, 480], [108, 531], [243, 530]];
const marks: P[] = [[107, 319], [244, 322], [140, 380], [203, 380], [143, 451], [207, 448], [110, 505], [243, 505], [511, 408], [622, 446], [790, 1218]];
const tri = ([x, y]: P) => `M${x} ${y}L${x + 14.5} ${y + 37.5}H${x - 14.5}Z`;

/* ---------- taskbar ---------- */
const Taskbar = styled.footer`height: 40px; background: #1c1c1c; display: flex; flex: none; font-size: 12px;`;
const StartButton = styled.div`width: 49px; height: 40px; display: flex; align-items: center; padding-left: 16px;`;
const AppButton = styled.div<{ $on?: boolean }>`
  width: ${p => (p.$on ? 49 : 41)}px; margin: 0 ${p => (p.$on ? 0 : 4)}px; height: 40px; display: flex; align-items: center; justify-content: center;
  background: ${p => (p.$on ? '#454545' : 'transparent')}; box-shadow: inset 0 -2px 0 #76b9ed;
`;
const Tray = styled.div`display: flex; align-items: center; margin-left: auto; padding-right: 19px; gap: 9px; letter-spacing: -0.5px;`;
const Clock = styled.div`line-height: 18px; text-align: center; width: 58px; margin-right: 3px;`;
const HiddenDefs = styled.svg`position: absolute;`;

const T = ({ children }: { children: React.ReactNode }) => <svg width="24" height="24" viewBox="0 0 24 24">{children}</svg>;
const swirl = <g fill="none" stroke="#27b8a0" strokeWidth="1.700"><path d="M9.500 12A2.600 2.600 0 0 1 14.500 12A4.500 4.500 0 0 1 6 14M14.500 12A2.600 2.600 0 0 1 9.500 12A4.500 4.500 0 0 1 18 10M2 11C3 5 11 4 15.500 7M22 13C21 19 13 20 8.500 17" /></g>;
const apps: React.ReactNode[] = [
  <T key="f"><path d="M3 3H10L12 5H21V21H3Z" fill="#f8d365" /><path d="M3 3H9V21H3Z" fill="#fde391" /><path d="M6 12H20V22H16V17H10V22H6Z" fill="#3f9bdc" /></T>,
  <T key="ff"><circle cx="12" cy="13" r="10" fill="#ff8a1f" /><path d="M3 9Q6 2 9 6Q14 1 13 0Q23 6 22 14Q20 23 12 23Q4 22 3 14Z" fill="#ff6a2a" /><path d="M13 1Q23 7 21 15Q19 5 12 6Z" fill="#ffd53a" /><circle cx="12" cy="13" r="5" fill="#8a4be0" /></T>,
  <T key="g"><path d="M12 0L17 5L12 10L7 5Z" fill="#f0845f" /><path d="M6 7L11 12L6 17L1 12Z" fill="#4ea3e0" /><path d="M18 7L23 12L18 17L13 12Z" fill="#7dc34a" /><path d="M12 14L17 19L12 24L7 19Z" fill="#f2d04a" /><path d="M12 3V20M12 8L17 12" stroke="#2a2a2a" strokeWidth="1.600" /></T>,
  <T key="q"><rect x="2" y="3" width="20" height="18" rx="2" fill="#39b54a" /><text x="12" y="16" fontSize="10.500" fontWeight="600" textAnchor="middle" fill="#fff">QC</text></T>,
  <T key="p"><circle cx="12" cy="12" r="11" fill="#ef5b2f" /><path d="M5 19L13 9L16 6L19 5L18 9L14 13L8 17Z" fill="#fff" /></T>,
  <T key="v"><path d="M17 1L23 4V20L17 23L5 12Z" fill="#2b9fe8" /><path d="M17 7L10 12L17 17Z" fill="#1c1c1c" /><path d="M1 8L4 6L17 17V23L1 9ZM1 16L4 18L9 14L6 11Z" fill="#0f78c4" /></T>,
  <T key="s">{swirl}</T>,
  <T key="m"><circle cx="12" cy="12" r="11" fill="#1556d8" /><path d="M12 19Q7 13 7 10A5 5 0 0 1 17 10Q17 13 12 19Z" fill="#fff" /><circle cx="12" cy="10" r="2" fill="#1556d8" /></T>,
  <T key="n"><path d="M8 2L20 4L16 22L3 20Z" fill="#a9d8de" /><path d="M8 2L20 4L19 8L7 6Z" fill="#e4eef0" /><path d="M20 4L22 18L16 22Z" fill="#5e9aa6" /></T>,
  <T key="w"><rect x="9" y="3" width="13" height="18" fill="#f4f6fa" /><path d="M15 7H20M15 11H20M15 15H20" stroke="#2b579a" /><path d="M1 4L14 1V23L1 20Z" fill="#2b579a" /><text x="7.500" y="16" fontSize="10.500" fontWeight="700" textAnchor="middle" fill="#fff">W</text></T>,
  <T key="x"><rect x="9" y="3" width="13" height="18" fill="#f4faf6" /><path d="M15 7H20M15 11H20M15 15H20" stroke="#1e7145" strokeWidth="2" /><path d="M1 4L14 1V23L1 20Z" fill="#1e7145" /><text x="7.500" y="16.500" fontSize="12" fontWeight="700" textAnchor="middle" fill="#fff">X</text></T>,
  <T key="c"><circle cx="12" cy="12" r="11" fill="#e33b2e" /><path d="M12 12L2.500 6.500A11 11 0 0 0 12 23L17 14Z" fill="#2da94f" /><path d="M12 12L17 14L12 23A11 11 0 0 0 22 7H12Z" fill="#fdbd00" /><circle cx="12" cy="12" r="5" fill="#fff" /><circle cx="12" cy="12" r="4" fill="#4285f4" /></T>,
  <T key="set"><circle cx="12" cy="12" r="5.500" fill="none" stroke="#fff" strokeWidth="2.600" /><circle cx="12" cy="12" r="8.500" fill="none" stroke="#fff" strokeWidth="2.500" strokeDasharray="3.340 3.340" /></T>,
  <T key="cp"><rect x="2" y="4" width="20" height="16" fill="#2f9bdc" /><rect x="4" y="6" width="16" height="12" fill="#bfe6fa" /><circle cx="9" cy="11" r="3" fill="#2f7fc0" /><path d="M14 8H19M14 11H19" stroke="#e0902a" strokeWidth="1.600" /></T>,
  <T key="cmd"><rect x="1" y="3" width="22" height="18" fill="#050505" stroke="#999" /><path d="M1 4H23" stroke="#ddd" strokeWidth="2" /><path d="M4 9H8M4 11.500H6M10 12H13" stroke="#ddd" /></T>,
  <T key="d"><circle cx="12" cy="12" r="11.500" fill="#1d9bf0" /><path d="M4 12H17Q18 9 20 10Q20 12 18.500 12.500Q16 18 10 18Q4 18 4 12ZM6 9H15V11H6ZM10 6H13V9H10Z" fill="#fff" /></T>,
  <T key="t"><rect x="2" y="3" width="20" height="14" fill="#d8dde0" /><path d="M4 13L8 8L12 12L16 6L20 10" stroke="#6a8ba0" fill="none" /><path d="M8 14Q5 16 7 19Q9 22 14 21Q19 22 20 17L17 13L12 15Z" fill="#c2c6c8" stroke="#777" strokeWidth=".7" /></T>,
  <T key="tg"><circle cx="12" cy="12" r="11" fill="#2a9fd8" /><path d="M5 12L18 6.500L16 18L11.500 14.500L9.500 17V13.500Z" fill="#fff" /></T>,
  <T key="r"><rect x="1" y="3" width="22" height="18" fill="#f2f4f2" /><rect x="3" y="6" width="10" height="13" fill="#4f7f74" /><path d="M15 8H21V18H15Z" fill="#d0dcd8" /></T>,
  <T key="h"><path d="M7 4L10 1L21 3V19L14 22L8 17Z" fill="#b8bcbe" /><path d="M14 6L21 4V19L14 22Z" fill="#dcdedf" /><path d="M2 14L6 12L13 15V22L2 21Z" fill="#8a9092" /><circle cx="6" cy="18" r="2.500" fill="#333" /><path d="M9 4L14 6V11L9 9Z" fill="#303234" /></T>,
];

export default function App() {
  return (
    <Window>
      <Global />
      <HiddenDefs width="0" height="0"><defs><linearGradient id="unitBlue"><stop offset="0" stopColor="#5bb4e4" /><stop offset="1" stopColor="#2f6fe0" /></linearGradient></defs></HiddenDefs>
      <TitleBar>
        <svg width="14" height="14" viewBox="2 2 20 20">{swirl}</svg>
        <TitleText>Gubras Client</TitleText>
        <WinControls>
          <svg width="12" height="12"><path d="M1 6.500H10" stroke="#111" /></svg>
          <svg width="12" height="12" fill="none" stroke="#111"><path d="M1.500 3.500H8.500V10.500H1.500ZM3.500 3.500V1.500H10.500V8.500H8.500" /></svg>
          <svg width="12" height="12"><path d="M1 1L11 11M11 1L1 11" stroke="#111" /></svg>
        </WinControls>
      </TitleBar>
      <MenuBar>
        <MenuItem $w={42} $active>Home</MenuItem><MenuItem $w={32}>File</MenuItem><MenuItem $w={76}>Connection</MenuItem><MenuItem $w={41}>Tools</MenuItem>
        <MenuItem $w={39}>View</MenuItem><MenuItem $w={63}>Windows</MenuItem><MenuItem $w={54}>Reports</MenuItem><MenuItem $w={39}>Help</MenuItem>
      </MenuBar>
      <Ribbon />
      <Work>
        <SidePanel />
        <MainPane>
          <TabStrip>
            <Tab>Trend diagram<svg width="12" height="12"><path d="M1 11L10 1M2 2L10 10" stroke="#0d0d0d" strokeWidth="1.900" /></svg></Tab>
          </TabStrip>
          <Board>
            <ChartsCol>
              <PanelHead $h={19} $pr={2}>Discharge gas temperature<DockButtons /></PanelHead>
              <ChartRow><Tools list={['fill', 'line', 'rect', 'circle', 'diag', 'text', 'note', 'y', 'x', 'pause', 'squares']} /><TrendChart /></ChartRow>
              <SplitH $h={4}><Dots /></SplitH>
              <Legend $h={74} $pt={1}><LegendLine c="#080808" name="Discharge Temperature" unit="K" on dx={0} /></Legend>
              <SplitH $h={6}><Dots /></SplitH>
              <PanelHead $h={19} $pr={2}>Online chart<DockButtons /></PanelHead>
              <ChartRow><Tools list={['fill', 'line', 'rect', 'circle', 'diag', 'text', 'note', 'y', 'pause', 'squares']} /><OnlineChart /></ChartRow>
              <SplitH $h={4}><Dots /></SplitH>
              <Legend $pt={1}>
                <LegendLine c="#1616b8" name="Dynamic Pressure" unit="Pa" dx={16} />
                <LegendLine c="#8c1414" name="Cynlinder Vibration Signal" unit="m/(s^2)" dx={16} />
              </Legend>
            </ChartsCol>
            <Gutter><Dots v /></Gutter>
            <DockCol>
              <DockHead $h={28} $lh={20}>Dock3<DockButtons /></DockHead>
              <DockBody $h={363}>
                <svg width="680" height="363">
                  <Compressor ty={-58}>
                    <g fill="#a0a0a4" opacity=".58">
                      {chips.map(([x, y]) => <rect key={`${x}-${y}`} x={x - 16.500} y={y - 21.500} width="33" height="43" rx="8" ry="10" />)}
                      <rect x="388" y="400" width="61" height="67" rx="8" ry="10" /><rect x="482" y="400" width="58" height="67" rx="8" ry="10" />
                    </g>
                  </Compressor>
                </svg>
              </DockBody>
              <SplitH $h={16} $pt={9}><Dots /></SplitH>
              <DockHead $h={27} $lh={18}>Dock4<DockButtons mt={3} /></DockHead>
              <DockBody $h={450}>
                <svg width="680" height="450">
                  <Compressor ty={-14}>
                    {marks.map(m => <path key={m.join()} d={tri(m)} fill="#98989a" />)}
                    <path d={tri([453, 327])} fill="#ffff00" /><path d={tri([406, 406])} fill="#ffff00" />
                  </Compressor>
                </svg>
              </DockBody>
            </DockCol>
          </Board>
        </MainPane>
      </Work>
      <Taskbar>
        <StartButton><svg width="16" height="16"><path d="M0 2L7 1V7.500H0ZM8 1L16 0V7.500H8ZM0 8.500H7V15L0 14ZM8 8.500H16V16L8 15Z" fill="#fff" /></svg></StartButton>
        {apps.map((a, i) => <AppButton key={i} $on={i === 6}>{a}</AppButton>)}
        <Tray>
          <svg width="12" height="8"><path d="M1 7L6 1.500L11 7" fill="none" stroke="#fff" strokeWidth="1.200" /></svg>
          <svg width="16" height="14" fill="none" stroke="#ddd"><path d="M2 12A10 10 0 0 1 13 2M5 13A8 8 0 0 1 13 5M8 13A5 5 0 0 1 13 8" /><circle cx="12" cy="12" r="1" fill="#fff" /></svg>
          <svg width="18" height="14" fill="none" stroke="#fff"><path d="M1 5H4L8 1V13L4 9H1ZM10 4Q12 7 10 10M12.500 2.500Q15 7 12.500 11.500M15 1Q18.500 7 15 13" /></svg>
          <span>ENG</span>
          <Clock>10:15 AM<br />2/2/2022</Clock>
          <svg width="26" height="28" viewBox="0 0 26 28"><path d="M1 4H15V17H8L5 20V17H1Z" fill="#fff" /><path d="M3 7.500H13M3 10.500H13M3 13.500H9" stroke="#1c1c1c" /><circle cx="16" cy="19.500" r="7.500" fill="#2a2a2a" stroke="#999" /><text x="16" y="23.500" fontSize="10.500" textAnchor="middle" fill="#fff">5</text></svg>
        </Tray>
      </Taskbar>
    </Window>
  );
}
